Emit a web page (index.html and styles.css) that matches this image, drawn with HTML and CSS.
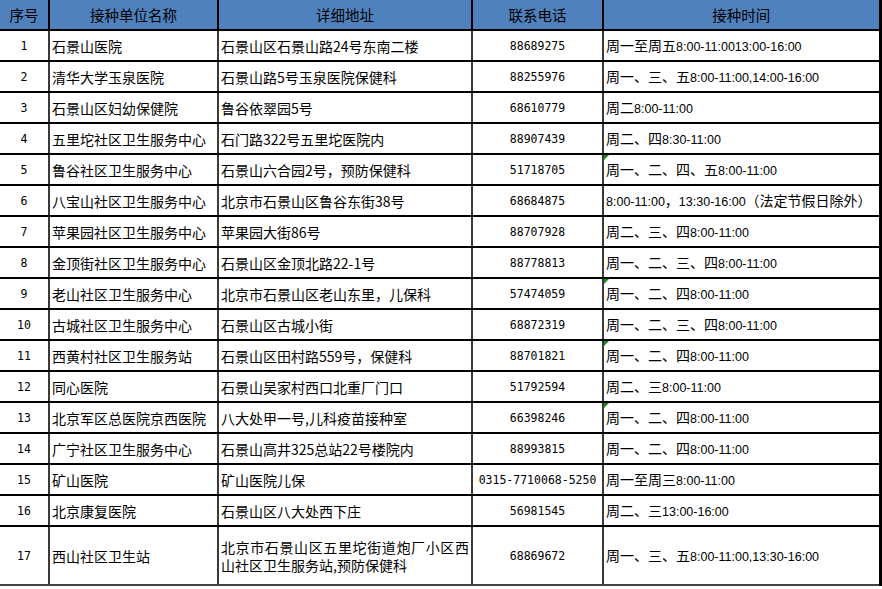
FILE: index.html
```html
<!DOCTYPE html>
<html lang="zh-CN">
<head>
<meta charset="utf-8">
<title>接种单位</title>
<link rel="stylesheet" href="styles.css">
</head>
<body>
<table class="grid">
  <colgroup>
    <col class="c1"><col class="c2"><col class="c3"><col class="c4"><col class="c5">
  </colgroup>
  <thead>
    <tr><th>序号</th><th>接种单位名称</th><th>详细地址</th><th>联系电话</th><th>接种时间</th></tr>
  </thead>
  <tbody>
    <tr><td class="no">1</td><td>石景山医院</td><td>石景山区石景山路24号东南二楼</td><td class="tel">88689275</td><td class="time">周一至周五<span class="n">8:00-11:0013:00-16:00</span></td></tr>
    <tr><td class="no">2</td><td>清华大学玉泉医院</td><td>石景山路5号玉泉医院保健科</td><td class="tel">88255976</td><td class="time">周一、三、五<span class="n">8:00-11:00,14:00-16:00</span></td></tr>
    <tr><td class="no">3</td><td>石景山区妇幼保健院</td><td>鲁谷依翠园5号</td><td class="tel">68610779</td><td class="time">周二<span class="n">8:00-11:00</span></td></tr>
    <tr><td class="no">4</td><td>五里坨社区卫生服务中心</td><td>石门路322号五里坨医院内</td><td class="tel">88907439</td><td class="time">周二、四<span class="n">8:30-11:00</span></td></tr>
    <tr><td class="no">5</td><td>鲁谷社区卫生服务中心</td><td>石景山六合园2号，预防保健科</td><td class="tel">51718705</td><td class="time err">周一、二、四、五<span class="n">8:00-11:00</span></td></tr>
    <tr><td class="no">6</td><td>八宝山社区卫生服务中心</td><td>北京市石景山区鲁谷东街38号</td><td class="tel">68684875</td><td class="time"><span class="n">8:00-11:00</span>，<span class="n">13:30-16:00</span>（法定节假日除外）</td></tr>
    <tr><td class="no">7</td><td>苹果园社区卫生服务中心</td><td>苹果园大街86号</td><td class="tel">88707928</td><td class="time">周二、三、四<span class="n">8:00-11:00</span></td></tr>
    <tr><td class="no">8</td><td>金顶街社区卫生服务中心</td><td>石景山区金顶北路22-1号</td><td class="tel">88778813</td><td class="time">周一、二、三、四<span class="n">8:00-11:00</span></td></tr>
    <tr><td class="no">9</td><td>老山社区卫生服务中心</td><td>北京市石景山区老山东里，儿保科</td><td class="tel">57474059</td><td class="time err">周一、二、四<span class="n">8:00-11:00</span></td></tr>
    <tr><td class="no">10</td><td>古城社区卫生服务中心</td><td>石景山区古城小街</td><td class="tel">68872319</td><td class="time">周一、二、三、四<span class="n">8:00-11:00</span></td></tr>
    <tr><td class="no">11</td><td>西黄村社区卫生服务站</td><td>石景山区田村路559号，保健科</td><td class="tel">88701821</td><td class="time err">周一、二、四<span class="n">8:00-11:00</span></td></tr>
    <tr><td class="no">12</td><td>同心医院</td><td>石景山吴家村西口北重厂门口</td><td class="tel">51792594</td><td class="time">周二、三<span class="n">8:00-11:00</span></td></tr>
    <tr><td class="no">13</td><td>北京军区总医院京西医院</td><td>八大处甲一号,儿科疫苗接种室</td><td class="tel">66398246</td><td class="time err">周一、二、四<span class="n">8:00-11:00</span></td></tr>
    <tr><td class="no">14</td><td>广宁社区卫生服务中心</td><td>石景山高井325总站22号楼院内</td><td class="tel">88993815</td><td class="time">周一、二、四<span class="n">8:00-11:00</span></td></tr>
    <tr><td class="no">15</td><td>矿山医院</td><td>矿山医院儿保</td><td class="tel">0315-7710068-5250</td><td class="time">周一至周三<span class="n">8:00-11:00</span></td></tr>
    <tr><td class="no">16</td><td>北京康复医院</td><td>石景山区八大处西下庄</td><td class="tel">56981545</td><td class="time">周二、三<span class="n">13:00-16:00</span></td></tr>
    <tr class="tall"><td class="no">17</td><td>西山社区卫生站</td><td class="wrap">北京市石景山区五里坨街道炮厂小区西山社区卫生服务站,预防保健科</td><td class="tel">68869672</td><td class="time">周一、三、五<span class="n">8:00-11:00,13:30-16:00</span></td></tr>
  </tbody>
</table>
</body>
</html>
```

FILE: styles.css
```css
html, body {
  margin: 0;
  padding: 0;
  background: #ffffff;
}

.grid {
  border-collapse: collapse;
  table-layout: fixed;
  width: 880px;
  font-family: "Noto Sans CJK SC", "Noto Sans", sans-serif;
  font-size: 14px;
  color: #000;
  border-right: 3px solid #000;
  border-bottom: 2px solid #333;
}

.c1 { width: 49px; }
.c2 { width: 169px; }
.c3 { width: 254px; }
.c4 { width: 131px; }
.c5 { width: 277px; }

.grid th {
  background: #4f81bd;
  font-weight: normal;
  height: 29px;
  padding: 0;
  text-align: center;
  border-left: 2px solid #000;
  border-bottom: 2px solid #000;
  line-height: 18px;
  font-size: 14.5px;
}

.grid th:first-child,
.grid td:first-child {
  border-left: none;
}

.grid td {
  height: 29px;
  padding: 0 2px 0 2px;
  border-left: 2px solid #3a3a3a;
  border-bottom: 2px solid #000;
  white-space: nowrap;
  overflow: hidden;
  line-height: 18px;
  vertical-align: middle;
}

.grid .tall td {
  height: 57px;
  border-bottom: 2px solid #444;
}

.grid td.wrap {
  white-space: normal;
  text-align: justify;
}

.grid td.no {
  text-align: center;
  font-family: "DejaVu Sans Mono", monospace;
  font-size: 11.5px;
}

.grid td.tel {
  text-align: center;
  font-family: "DejaVu Sans Mono", monospace;
  font-size: 11.5px;
}

.grid td.time {
  position: relative;
}

.n {
  font-family: "Liberation Sans", Arial, sans-serif;
  font-size: 12.5px;
}

.grid td.err::before {
  content: "";
  position: absolute;
  left: 0;
  top: 0;
  border-top: 5px solid #1a8a1a;
  border-right: 5px solid transparent;
}
```
